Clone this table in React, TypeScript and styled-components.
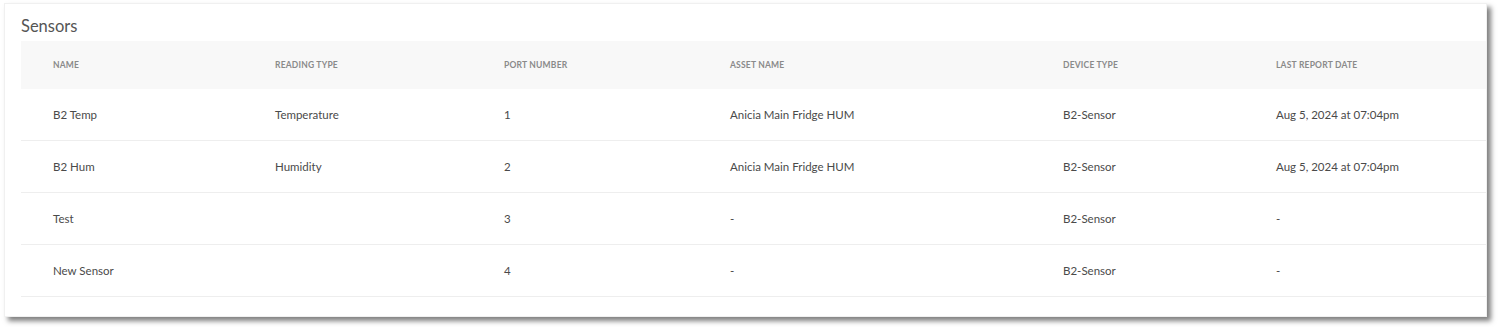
import React from "react";
import styled, { createGlobalStyle } from "styled-components";

const Global = createGlobalStyle`
  html, body { margin: 0; padding: 0; background: #ffffff; }
  body { font-family: "Lato", "Liberation Sans", sans-serif; }
`;

const Page = styled.div`
  padding: 3px 13px 10px 4px;
  width: 1500px;
  box-sizing: border-box;
`;

const Card = styled.section`
  width: 1483px;
  height: 314px;
  box-sizing: border-box;
  background: #fff;
  border: 1px solid #f0f0f0;
  box-shadow: 4px 4px 5px rgba(0, 0, 0, 0.5);
  overflow: hidden;
  padding-left: 16px;
  display: flex;
  flex-direction: column;
`;

const Title = styled.h2`
  margin: 0;
  height: 37px;
  box-sizing: border-box;
  padding-top: 6px;
  display: flex;
  align-items: center;
  font-size: 16.5px;
  font-weight: 400;
  color: #555;
`;

const Row = styled.div<{ $head?: boolean }>`
  display: grid;
  grid-template-columns: 222px 229px 226px 333px 213px 1fr;
  height: ${(p) => (p.$head ? "48px" : "51px")};
  background: ${(p) => (p.$head ? "#f8f8f8" : "#fff")};
  border-bottom: ${(p) => (p.$head ? "none" : "1px solid #eeeeee")};
  align-items: center;
`;

const HeadCell = styled.div`
  padding-left: 32px;
  font-size: 8.5px;
  font-weight: 700;
  letter-spacing: 0.2px;
  color: #8a8a8a;
  text-transform: uppercase;
`;

const Cell = styled.div`
  padding-left: 32px;
  font-size: 11.5px;
  color: #4a4a4a;
`;

const columns = ["Name", "Reading Type", "Port Number", "Asset Name", "Device Type", "Last Report Date"];

const rows = [
  ["B2 Temp", "Temperature", "1", "Anicia Main Fridge HUM", "B2-Sensor", "Aug 5, 2024 at 07:04pm"],
  ["B2 Hum", "Humidity", "2", "Anicia Main Fridge HUM", "B2-Sensor", "Aug 5, 2024 at 07:04pm"],
  ["Test", "", "3", "-", "B2-Sensor", "-"],
  ["New Sensor", "", "4", "-", "B2-Sensor", "-"],
];

export default function App() {
  return (
    <>
      <Global />
      <Page>
        <Card>
          <Title>Sensors</Title>
          <Row $head>
            {columns.map((c) => (
              <HeadCell key={c}>{c}</HeadCell>
            ))}
          </Row>
          {rows.map((r, i) => (
            <Row key={i}>
              {r.map((v, j) => (
                <Cell key={j}>{v}</Cell>
              ))}
            </Row>
          ))}
        </Card>
      </Page>
    </>
  );
}
